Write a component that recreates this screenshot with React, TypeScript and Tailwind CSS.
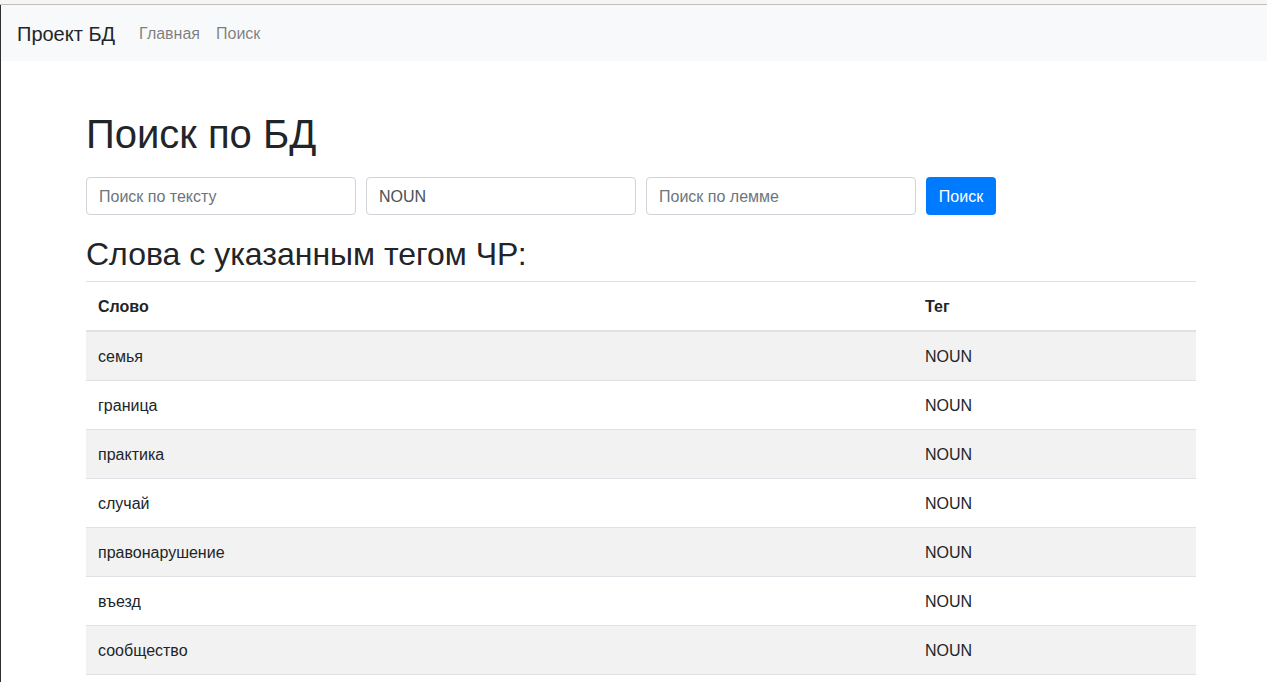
import React from 'react';

const rows = ['семья', 'граница', 'практика', 'случай', 'правонарушение', 'въезд', 'сообщество'];

const App = () => {
    return (
        <div className="min-h-screen bg-white text-[#212529]" style={{ fontFamily: '"Liberation Sans", Arial, sans-serif' }}>
            <div className="h-[5px] bg-[#f6f5f4] border-b border-[#c2bdb7]"></div>
            <div className="border-l border-[#2f2f2f] min-h-[677px]">
                <nav className="flex items-center h-[56px] px-4 pt-[2px] bg-[#f8f9fa]">
                    <a href="#" className="text-[20px] leading-[30px] mr-4 text-[#212529]">Проект БД</a>
                    <a href="#" className="px-2 text-[16px] leading-6 text-black/50">Главная</a>
                    <a href="#" className="px-2 text-[16px] leading-6 text-black/50">Поиск</a>
                </nav>

                <main className="pl-[85px] w-[1195px]">
                    <h1 className="mt-[49px] text-[40px] leading-[48px] font-normal">Поиск по БД</h1>

                    <form className="flex items-center gap-[10px] mt-[19px]">
                        <input
                            type="text"
                            placeholder="Поиск по тексту"
                            className="w-[270px] h-[38px] px-3 pt-[2px] text-[16px] text-[#495057] placeholder-[#6c757d] border border-[#ced4da] rounded-[4px] outline-none"
                        />
                        <input
                            type="text"
                            defaultValue="NOUN"
                            className="w-[270px] h-[38px] px-3 pt-[2px] text-[16px] text-[#495057] placeholder-[#6c757d] border border-[#ced4da] rounded-[4px] outline-none"
                        />
                        <input
                            type="text"
                            placeholder="Поиск по лемме"
                            className="w-[270px] h-[38px] px-3 pt-[2px] text-[16px] text-[#495057] placeholder-[#6c757d] border border-[#ced4da] rounded-[4px] outline-none"
                        />
                        <button type="submit" className="w-[70px] h-[38px] pt-[2px] text-[16px] text-white bg-[#007bff] rounded-[4px]">
                            Поиск
                        </button>
                    </form>

                    <h2 className="mt-[20px] mb-2 pt-px text-[32px] leading-[37px] font-normal">Слова с указанным тегом ЧР:</h2>

                    <table className="w-[1110px] border-collapse text-[16px] leading-6">
                        <thead>
                            <tr>
                                <th className="w-[827px] px-3 pt-[13px] pb-[11px] text-left font-bold border-t border-b-2 border-[#dee2e6]">Слово</th>
                                <th className="px-3 pt-[13px] pb-[11px] text-left font-bold border-t border-b-2 border-[#dee2e6]">Тег</th>
                            </tr>
                        </thead>
                        <tbody>
                            {rows.map((w, i) => (
                                <tr key={w} className={i % 2 === 0 ? 'bg-[#f2f2f2]' : ''}>
                                    <td className="px-3 pt-[13px] pb-[11px] border-y border-[#dee2e6]">{w}</td>
                                    <td className="px-3 pt-[13px] pb-[11px] border-y border-[#dee2e6]">NOUN</td>
                                </tr>
                            ))}
                        </tbody>
                    </table>
                </main>
            </div>
        </div>
    );
};

export default App;
